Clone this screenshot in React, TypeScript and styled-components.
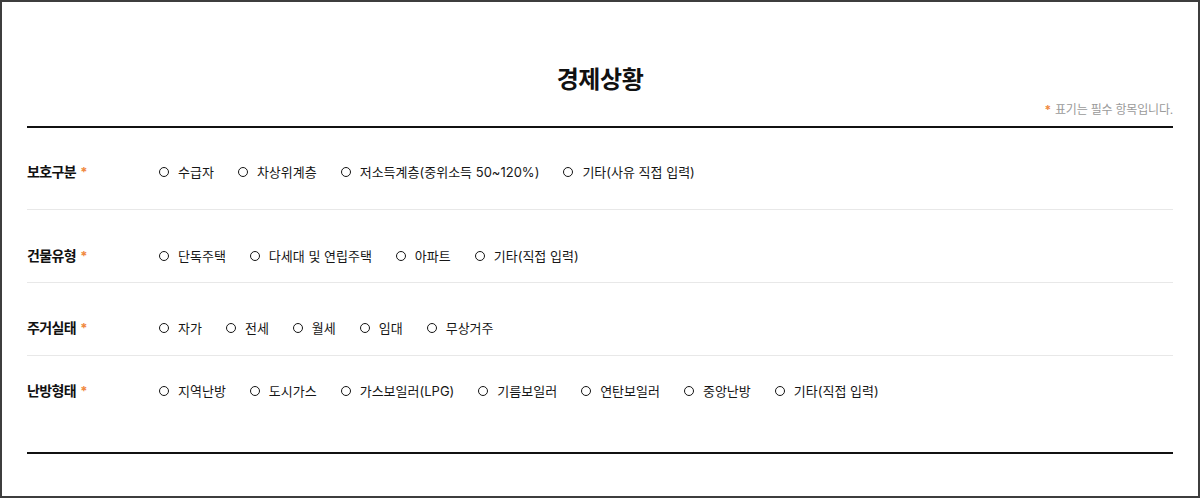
import React from "react";
import styled, { createGlobalStyle } from "styled-components";

const GlobalStyle = createGlobalStyle`
  html, body { margin: 0; padding: 0; background: #fff; }
  body { font-family: Inter, "Noto Sans CJK KR", "Noto Sans", sans-serif; color: #222; }
  * { box-sizing: border-box; }
`;

const Frame = styled.div`
  width: 1200px;
  height: 498px;
  border: 2px solid #3d3d3d;
  padding: 63px 25px 0;
`;

const Title = styled.h2`
  margin: 0;
  text-align: center;
  font-size: 24px;
  line-height: 30px;
  font-weight: 700;
  color: #111;
  letter-spacing: -0.4px;
`;

const Notice = styled.p`
  margin: 7px 0 8px;
  text-align: right;
  font-size: 12px;
  line-height: 16px;
  color: #9a9a9a;
  letter-spacing: -0.2px;
`;

const Star = styled.span`
  color: #f0883e;
  font-weight: 700;
  margin-right: 4px;
`;

const Table = styled.div`
  border-top: 2px solid #111;
  border-bottom: 2px solid #111;
`;

const Row = styled.div<{ $top: number; $bottom: number; $last?: boolean }>`
  display: flex;
  align-items: center;
  padding: ${(p) => p.$top}px 0 ${(p) => p.$bottom}px;
  border-bottom: ${(p) => (p.$last ? "none" : "1px solid #e8e8e8")};
`;

const Label = styled.div`
  width: 132px;
  flex: none;
  font-size: 14px;
  line-height: 20px;
  font-weight: 700;
  color: #111;
  letter-spacing: -0.6px;
`;

const LabelStar = styled.span`
  color: #f0883e;
  margin-left: 4px;
  font-size: 13px;
`;

const Options = styled.div`
  display: flex;
  align-items: center;
  gap: 24px;
`;

const Option = styled.label`
  display: flex;
  align-items: center;
  gap: 9px;
  font-size: 13px;
  line-height: 20px;
  color: #161616;
  cursor: pointer;
`;

const Radio = styled.input.attrs({ type: "radio" })`
  appearance: none;
  margin: 0;
  width: 10px;
  height: 10px;
  border: 1.6px solid #151515;
  border-radius: 50%;
  flex: none;
  &:checked {
    background: radial-gradient(circle, #151515 0 2px, transparent 2.5px);
  }
`;

type Group = { name: string; label: string; options: string[]; top: number; bottom: number };

const groups: Group[] = [
  {
    name: "protect",
    label: "보호구분",
    options: ["수급자", "차상위계층", "저소득계층(중위소득 50~120%)", "기타(사유 직접 입력)"],
    top: 34,
    bottom: 27,
  },
  {
    name: "building",
    label: "건물유형",
    options: ["단독주택", "다세대 및 연립주택", "아파트", "기타(직접 입력)"],
    top: 36,
    bottom: 16,
  },
  {
    name: "housing",
    label: "주거실태",
    options: ["자가", "전세", "월세", "임대", "무상거주"],
    top: 35,
    bottom: 17,
  },
  {
    name: "heating",
    label: "난방형태",
    options: ["지역난방", "도시가스", "가스보일러(LPG)", "기름보일러", "연탄보일러", "중앙난방", "기타(직접 입력)"],
    top: 25,
    bottom: 51,
  },
];

export default function App() {
  return (
    <>
      <GlobalStyle />
      <Frame>
        <Title>경제상황</Title>
        <Notice>
          <Star>*</Star>표기는 필수 항목입니다.
        </Notice>
        <Table>
          {groups.map((g, i) => (
            <Row key={g.name} $top={g.top} $bottom={g.bottom} $last={i === groups.length - 1}>
              <Label>
                {g.label}
                <LabelStar>*</LabelStar>
              </Label>
              <Options>
                {g.options.map((o) => (
                  <Option key={o}>
                    <Radio name={g.name} value={o} />
                    {o}
                  </Option>
                ))}
              </Options>
            </Row>
          ))}
        </Table>
      </Frame>
    </>
  );
}
